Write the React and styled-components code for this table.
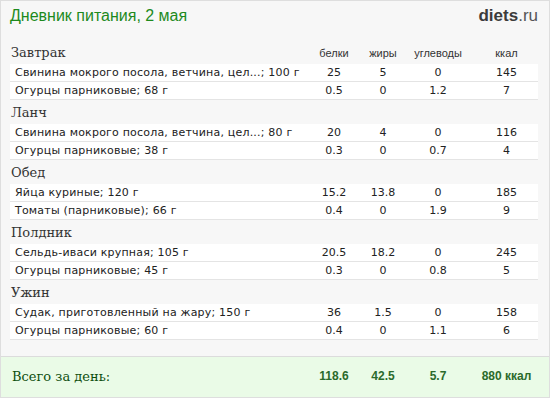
import React from 'react'
import styled, { createGlobalStyle } from 'styled-components'

const GlobalStyle = createGlobalStyle`
  html, body {
    margin: 0;
    padding: 0;
    background: #fff;
  }
  * {
    box-sizing: border-box;
  }
`

const Page = styled.div`
  width: 550px;
  height: 398px;
  border: 1px solid #dedede;
  background: #f7f7f7;
  display: flex;
  flex-direction: column;
  overflow: hidden;
`

const TopBar = styled.div`
  height: 29px;
  padding: 0 11px 0 9px;
  display: flex;
  align-items: center;
  justify-content: space-between;
  margin-bottom: 10px;
`

const Title = styled.div`
  font-family: "Liberation Sans", Arial, sans-serif;
  font-size: 16px;
  color: #1d8a1d;
`

const Logo = styled.div`
  font-family: "Liberation Sans", Arial, sans-serif;
  font-size: 17px;
  color: #3b3b3b;

  b {
    font-weight: bold;
  }
  span {
    color: #555;
  }
`

const Body = styled.div`
  padding: 0 11px 0 9px;
`

const Grid = styled.div`
  display: grid;
  grid-template-columns: 1fr 46px 52px 58px 71px;
  align-items: center;
`

const SectionHead = styled(Grid)`
  height: 24px;
  align-items: end;
  padding-bottom: 3px;
`

const SectionName = styled.div`
  font-family: "DejaVu Serif", Georgia, serif;
  font-size: 13px;
  color: #333;
  line-height: 16px;
  padding-left: 1px;
`

const ColLabel = styled.div`
  font-family: "Liberation Sans", Tahoma, sans-serif;
  font-size: 11px;
  color: #333;
  text-align: center;
  line-height: 13px;
  padding-bottom: 1px;
  padding-left: ${(p) => (p.$last ? '8px' : '0')};
`

const Row = styled(Grid)`
  height: 18px;
  background: #fff;
  border-bottom: 1px solid #e4e4e4;
  font-family: "DejaVu Sans", Verdana, sans-serif;
  font-size: 11px;
  color: #222;
`

const Name = styled.div`
  padding-left: 5px;
  letter-spacing: 0.2px;
  white-space: nowrap;
  overflow: hidden;
`

const Cell = styled.div`
  text-align: center;
  padding-left: ${(p) => (p.$last ? '8px' : '0')};
`

const Footer = styled(Grid)`
  margin-top: auto;
  height: 41px;
  border-top: 1px solid #dcdcdc;
  background: #eafbe7;
  padding: 0 11px 0 9px;
  padding-bottom: 2px;
`

const TotalLabel = styled.div`
  font-family: "DejaVu Serif", Georgia, serif;
  font-size: 13px;
  color: #0f4f0f;
  padding-left: 2px;
`

const TotalCell = styled.div`
  font-family: "Liberation Sans", Arial, sans-serif;
  font-weight: bold;
  font-size: 12px;
  color: #2b6a2b;
  text-align: center;
  white-space: nowrap;
  padding-left: ${(p) => (p.$last ? '8px' : '0')};
`

const meals = [
  {
    name: 'Завтрак',
    items: [
      ['Свинина мокрого посола, ветчина, цел...; 100 г', '25', '5', '0', '145'],
      ['Огурцы парниковые; 68 г', '0.5', '0', '1.2', '7'],
    ],
  },
  {
    name: 'Ланч',
    items: [
      ['Свинина мокрого посола, ветчина, цел...; 80 г', '20', '4', '0', '116'],
      ['Огурцы парниковые; 38 г', '0.3', '0', '0.7', '4'],
    ],
  },
  {
    name: 'Обед',
    items: [
      ['Яйца куриные; 120 г', '15.2', '13.8', '0', '185'],
      ['Томаты (парниковые); 66 г', '0.4', '0', '1.9', '9'],
    ],
  },
  {
    name: 'Полдник',
    items: [
      ['Сельдь-иваси крупная; 105 г', '20.5', '18.2', '0', '245'],
      ['Огурцы парниковые; 45 г', '0.3', '0', '0.8', '5'],
    ],
  },
  {
    name: 'Ужин',
    items: [
      ['Судак, приготовленный на жару; 150 г', '36', '1.5', '0', '158'],
      ['Огурцы парниковые; 60 г', '0.4', '0', '1.1', '6'],
    ],
  },
]

const labels = ['белки', 'жиры', 'углеводы', 'ккал']

const App = () => {
  return (
    <>
      <GlobalStyle />
      <Page>
        <TopBar>
          <Title>Дневник питания, 2 мая</Title>
          <Logo>
            <b>diets</b>
            <span>.ru</span>
          </Logo>
        </TopBar>
        <Body>
          {meals.map((meal, i) => (
            <div key={meal.name}>
              <SectionHead>
                <SectionName>{meal.name}</SectionName>
                {i === 0 &&
                  labels.map((l, j) => (
                    <ColLabel key={l} $last={j === 3}>
                      {l}
                    </ColLabel>
                  ))}
              </SectionHead>
              {meal.items.map((item) => (
                <Row key={item[0]}>
                  <Name>{item[0]}</Name>
                  {item.slice(1).map((v, j) => (
                    <Cell key={j} $last={j === 3}>
                      {v}
                    </Cell>
                  ))}
                </Row>
              ))}
            </div>
          ))}
        </Body>
        <Footer>
          <TotalLabel>Всего за день:</TotalLabel>
          <TotalCell>118.6</TotalCell>
          <TotalCell>42.5</TotalCell>
          <TotalCell>5.7</TotalCell>
          <TotalCell $last>880 ккал</TotalCell>
        </Footer>
      </Page>
    </>
  )
}

export default App
